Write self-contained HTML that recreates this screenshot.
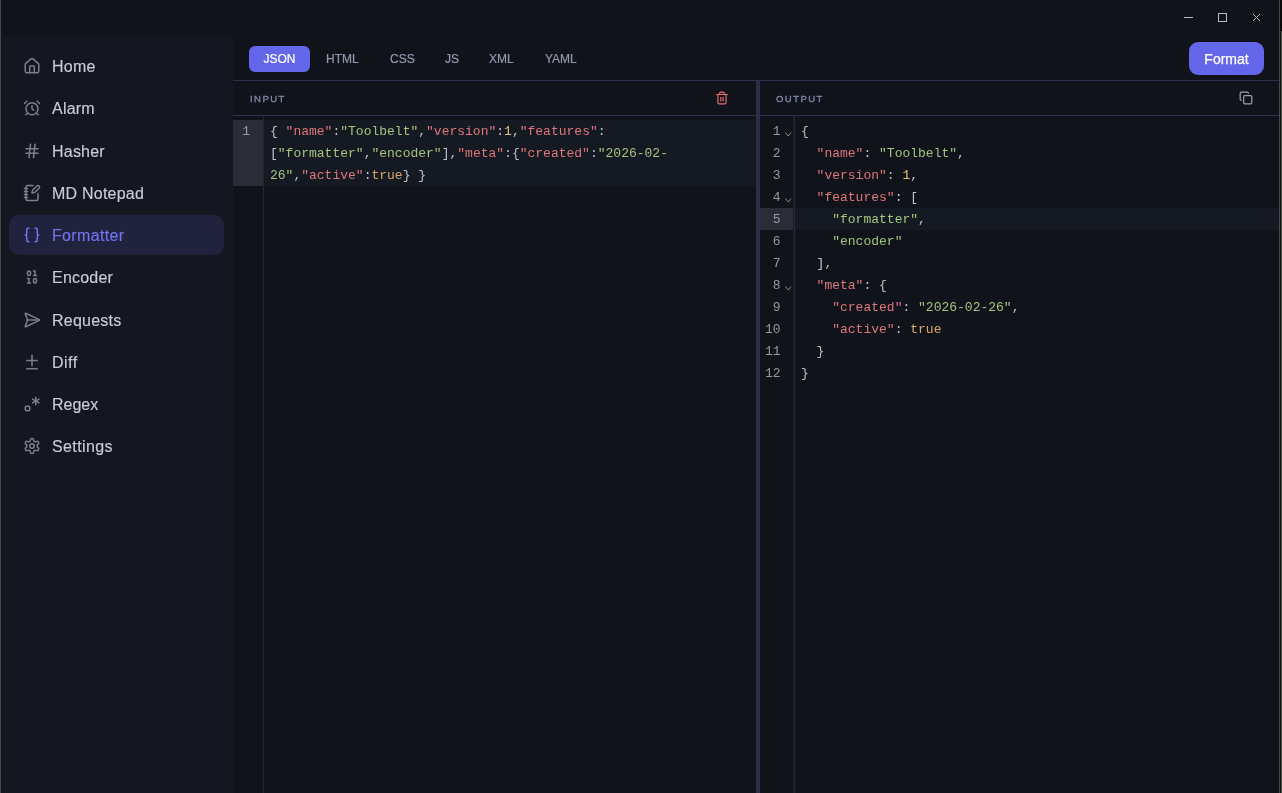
<!DOCTYPE html>
<html><head><meta charset="utf-8">
<style>
*{margin:0;padding:0;box-sizing:border-box}
html,body{-webkit-font-smoothing:antialiased;width:1282px;height:793px;overflow:hidden;background:#10131a;font-family:"Liberation Sans",sans-serif}
.abs{position:absolute}
body>*{will-change:transform}
.nav span{will-change:transform}
#lb{left:0;top:0;width:1px;height:793px;background:#45484e}
#rb{left:1279px;top:0;width:1px;height:793px;background:#45484e}
#rb2{left:1280px;top:0;width:2px;height:31px;background:#0a0a0a}
#rb3{left:1280px;top:31px;width:1px;height:762px;background:#121412}
#rb4{left:1281px;top:31px;width:1px;height:762px;background:#4d534d}
#side{left:1px;top:37px;width:232px;border-left:1px solid #0e1016;height:756px;background:#141720}
.nav{position:absolute;left:7px;width:215px;height:40px;border-radius:10px}
.nav svg{position:absolute;left:14px;top:11px;width:18px;height:18px;fill:none;stroke:#7b7f8c;stroke-width:2;stroke-linecap:round;stroke-linejoin:round}
.nav span{position:absolute;left:43px;top:12px;font-size:16px;letter-spacing:0.22px;color:#c8cbdc;-webkit-text-stroke:0.15px #c8cbdc;line-height:18px;white-space:nowrap}
.nav.act{background:#21223d}
.nav.act span{color:#7173f0;-webkit-text-stroke:0.15px #7173f0;letter-spacing:0.35px}
.nav.act svg{stroke:#7173f0}
.tab{position:absolute;top:46px;height:26px;font-size:12px;line-height:26px;color:#9199ae;-webkit-text-stroke:0.2px #9199ae;white-space:nowrap}
.tab.act{background:#6366e8;color:#fff;-webkit-text-stroke:0.2px #fff;border-radius:6px;text-align:center}
#fmt{left:1189px;top:42px;width:75px;height:33px;border-radius:9px;background:#6366e8;color:#fff;font-size:14px;line-height:35px;text-align:center;-webkit-text-stroke:0.25px #fff}
.hl{height:1px;background:#2b2f47}
.lbl{font-size:9.5px;letter-spacing:1.45px;color:#7d87a6;-webkit-text-stroke:0.35px #7d87a6;line-height:12px}
.mono{font-family:"Liberation Mono",monospace;font-size:13px;line-height:22px;white-space:pre}
.k{color:#dd777b}.s{color:#a2c582}.n{color:#e5c07b}.b{color:#d9a66f}.p{color:#bcc1cc}
.ln{color:#9598a3;text-align:right}
</style></head><body>
<div class="abs" id="lb"></div>
<div class="abs" id="rb"></div>
<div class="abs" id="rb2"></div>
<div class="abs" id="rb3"></div>
<div class="abs" id="rb4"></div>

<!-- window controls -->
<svg class="abs" style="left:1180px;top:8px" width="100" height="20" viewBox="0 0 100 20">
 <g stroke="#b8b9bc" stroke-width="1" fill="none">
  <line x1="4" y1="9.5" x2="13" y2="9.5"/>
  <rect x="38.5" y="5.5" width="8" height="8"/>
  <line x1="73" y1="6" x2="80" y2="13"/>
  <line x1="80" y1="6" x2="73" y2="13"/>
 </g>
</svg>

<div class="abs" id="side">
 <div class="nav" style="top:9px"><svg viewBox="0 0 24 24"><path d="M15 21v-8a1 1 0 0 0-1-1h-4a1 1 0 0 0-1 1v8"/><path d="M3 10a2 2 0 0 1 .709-1.528l7-5.999a2 2 0 0 1 2.582 0l7 5.999A2 2 0 0 1 21 10v9a2 2 0 0 1-2 2H5a2 2 0 0 1-2-2z"/></svg><span>Home</span></div>
 <div class="nav" style="top:51px"><svg viewBox="0 0 24 24"><circle cx="12" cy="13" r="8"/><path d="M12 9v4l2 2"/><path d="M5 3 2 6"/><path d="m22 6-3-3"/><path d="M6.38 18.7 4 21"/><path d="M17.64 18.67 20 21"/></svg><span>Alarm</span></div>
 <div class="nav" style="top:94px"><svg viewBox="0 0 24 24"><line x1="4" x2="20" y1="9" y2="9"/><line x1="4" x2="20" y1="15" y2="15"/><line x1="10" x2="8" y1="3" y2="21"/><line x1="16" x2="14" y1="3" y2="21"/></svg><span>Hasher</span></div>
 <div class="nav" style="top:136px"><svg viewBox="0 0 24 24"><path d="M13.4 2H6a2 2 0 0 0-2 2v16a2 2 0 0 0 2 2h12a2 2 0 0 0 2-2v-7.4"/><path d="M2 6h4"/><path d="M2 10h4"/><path d="M2 14h4"/><path d="M2 18h4"/><path d="M21.378 5.626a1 1 0 1 0-3.004-3.004l-5.01 5.012a2 2 0 0 0-.506.854l-.837 2.87a.5.5 0 0 0 .62.62l2.87-.837a2 2 0 0 0 .854-.506z"/></svg><span>MD Notepad</span></div>
 <div class="nav act" style="top:178px"><svg viewBox="0 0 24 24"><path d="M8 3H7a2 2 0 0 0-2 2v5a2 2 0 0 1-2 2 2 2 0 0 1 2 2v5c0 1.1.9 2 2 2h1"/><path d="M16 21h1a2 2 0 0 0 2-2v-5c0-1.1.9-2 2-2a2 2 0 0 1-2-2V5a2 2 0 0 0-2-2h-1"/></svg><span>Formatter</span></div>
 <div class="nav" style="top:220px"><svg viewBox="0 0 24 24"><rect x="14" y="14" width="4" height="6" rx="2"/><rect x="6" y="4" width="4" height="6" rx="2"/><path d="M6 20h4"/><path d="M14 10h4"/><path d="M6 14h2v6"/><path d="M14 4h2v6"/></svg><span>Encoder</span></div>
 <div class="nav" style="top:263px"><svg viewBox="0 0 24 24"><path d="M3.714 3.048a.498.498 0 0 0-.683.627l2.843 7.627a2 2 0 0 1 0 1.396l-2.842 7.627a.498.498 0 0 0 .682.627l18-8.5a.5.5 0 0 0 0-.904z"/><path d="M6 12h16"/></svg><span>Requests</span></div>
 <div class="nav" style="top:305px"><svg viewBox="0 0 24 24"><path d="M12 3v14"/><path d="M5 10h14"/><path d="M5 21h14"/></svg><span style="letter-spacing:0.5px">Diff</span></div>
 <div class="nav" style="top:347px"><svg viewBox="0 0 24 24"><path d="M17 3v10"/><path d="m12.67 5.5 8.66 5"/><path d="m12.67 10.5 8.66-5"/><path d="M9 17a2 2 0 0 0-2-2H5a2 2 0 0 0-2 2v2a2 2 0 0 0 2 2h2a2 2 0 0 0 2-2v-2z"/></svg><span style="letter-spacing:0">Regex</span></div>
 <div class="nav" style="top:389px"><svg viewBox="0 0 24 24"><path d="M12.22 2h-.44a2 2 0 0 0-2 2v.18a2 2 0 0 1-1 1.73l-.43.25a2 2 0 0 1-2 0l-.15-.08a2 2 0 0 0-2.730.73l-.22.38a2 2 0 0 0 .73 2.73l.15.1a2 2 0 0 1 1 1.72v.51a2 2 0 0 1-1 1.74l-.15.09a2 2 0 0 0-.73 2.73l.22.38a2 2 0 0 0 2.73.73l.15-.08a2 2 0 0 1 2 0l.43.25a2 2 0 0 1 1 1.73V20a2 2 0 0 0 2 2h.44a2 2 0 0 0 2-2v-.18a2 2 0 0 1 1-1.73l.43-.25a2 2 0 0 1 2 0l.15.08a2 2 0 0 0 2.73-.73l.22-.39a2 2 0 0 0-.73-2.730l-.15-.08a2 2 0 0 1-1-1.74v-.5a2 2 0 0 1 1-1.74l.15-.09a2 2 0 0 0 .73-2.73l-.22-.38a2 2 0 0 0-2.73-.73l-.15.08a2 2 0 0 1-2 0l-.43-.25a2 2 0 0 1-1-1.73V4a2 2 0 0 0-2-2z"/><circle cx="12" cy="12" r="3"/></svg><span style="letter-spacing:0.4px">Settings</span></div>
</div>

<!-- toolbar -->
<div class="tab act" style="left:249px;width:61px">JSON</div>
<div class="tab" style="left:326px">HTML</div>
<div class="tab" style="left:390px">CSS</div>
<div class="tab" style="left:445px">JS</div>
<div class="tab" style="left:489px">XML</div>
<div class="tab" style="left:545px">YAML</div>
<div class="abs" id="fmt">Format</div>

<div class="abs hl" style="left:233px;top:80px;width:1046px"></div>
<div class="abs hl" style="left:233px;top:115px;width:1046px"></div>
<div class="abs" style="left:756px;top:81px;width:4px;height:712px;background:#2a2e46"></div>

<!-- input panel -->
<div class="abs lbl" style="left:249.5px;top:92.5px">INPUT</div>
<svg class="abs" style="left:715px;top:91px" width="14" height="14" viewBox="0 0 24 24" fill="none" stroke="#e5736f" stroke-width="2" stroke-linecap="round" stroke-linejoin="round"><path d="M3 6h18"/><path d="M19 6v14c0 1-1 2-2 2H7c-1 0-2-1-2-2V6"/><path d="M8 6V4c0-1 1-2 2-2h4c1 0 2 1 2 2v2"/><line x1="10" x2="10" y1="11" y2="17"/><line x1="14" x2="14" y1="11" y2="17"/></svg>

<div class="abs" style="left:233px;top:120px;width:30px;height:66px;background:#2a2d35"></div>
<div class="abs" style="left:264px;top:120px;width:492px;height:66px;background:#151922"></div>
<div class="abs" style="left:263px;top:116px;width:1px;height:677px;background:#21253a"></div>
<div class="abs mono ln" style="left:233px;top:121px;width:17px">1</div>
<div class="abs mono p" style="left:269.5px;top:121px"><span class="p">{ </span><span class="k">"name"</span>:<span class="s">"Toolbelt"</span>,<span class="k">"version"</span>:<span class="n">1</span>,<span class="k">"features"</span>:
[<span class="s">"formatter"</span>,<span class="s">"encoder"</span>],<span class="k">"meta"</span>:{<span class="k">"created"</span>:<span class="s">"2026-02-</span>
<span class="s">26"</span>,<span class="k">"active"</span>:<span class="b">true</span>} }</div>

<!-- output panel -->
<div class="abs lbl" style="left:776px;top:92.5px">OUTPUT</div>
<svg class="abs" style="left:1239px;top:91px" width="14" height="14" viewBox="0 0 24 24" fill="none" stroke="#9ea3b5" stroke-width="2" stroke-linecap="round" stroke-linejoin="round"><rect width="14" height="14" x="8" y="8" rx="2" ry="2"/><path d="M4 16c-1.1 0-2-.9-2-2V4c0-1.1.9-2 2-2h10c1.1 0 2 .9 2 2"/></svg>

<div class="abs" style="left:760px;top:208px;width:33px;height:22px;background:#2a2d35"></div>
<div class="abs" style="left:795px;top:208px;width:484px;height:22px;background:#151922"></div>
<div class="abs" style="left:793px;top:116px;width:1px;height:677px;background:#181b29"></div><div class="abs" style="left:794px;top:116px;width:1px;height:677px;background:#262a3f"></div>
<div class="abs mono ln" style="left:760px;top:121px;width:20.5px">1
2
3
4
5
6
7
8
9
10
11
12</div>
<svg class="abs" style="left:780px;top:120px" width="14" height="200" fill="none" stroke="#8b8f9a" stroke-width="1"><polyline points="5.5,12.5 8.25,16 11,12.5"/><polyline points="5.5,78.5 8.25,82 11,78.5"/><polyline points="5.5,166.5 8.25,170 11,166.5"/></svg>
<div class="abs mono p" style="left:801px;top:121px">{
  <span class="k">"name"</span>: <span class="s">"Toolbelt"</span>,
  <span class="k">"version"</span>: <span class="n">1</span>,
  <span class="k">"features"</span>: [
    <span class="s">"formatter"</span>,
    <span class="s">"encoder"</span>
  ],
  <span class="k">"meta"</span>: {
    <span class="k">"created"</span>: <span class="s">"2026-02-26"</span>,
    <span class="k">"active"</span>: <span class="b">true</span>
  }
}</div>
</body></html>
